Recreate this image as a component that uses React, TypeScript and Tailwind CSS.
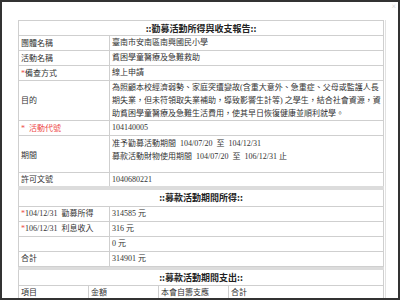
import React from 'react';

const td = 'border border-[#cfcfcf] px-[2px] py-0 align-middle';
const red = 'text-[#ee4b4b]';

const Row: React.FC<{ label: React.ReactNode; children?: React.ReactNode; h?: string }> = ({
    label,
    children,
    h = 'h-[15px]',
}) => (
    <tr className={h}>
        <td className={`${td} w-[91px]`}>{label}</td>
        <td className={`${td} align-top`}>{children}</td>
    </tr>
);

const Title: React.FC<{ children: React.ReactNode; gap?: boolean }> = ({ children, gap }) => (
    <tr className={gap ? 'h-[18px]' : 'h-[15px]'}>
        <td
            colSpan={2}
            className={`${td} text-center font-bold font-['Noto_Sans_CJK_TC',sans-serif] text-[9px] text-[#222] ${
                gap ? 'border-t-[4px] border-t-[#dcdcdc]' : ''
            }`}
        >
            {children}
        </td>
    </tr>
);

export default function App() {
    return (
        <div className="relative h-[300px] w-[400px] overflow-hidden border-2 border-[#333] bg-white pl-[16px] pt-[18px] font-['Liberation_Serif','Noto_Sans_CJK_TC',serif] text-[8px] leading-[13px] text-[#333]">
            <span className="absolute right-[2px] top-[-2px] text-[8px] text-[#ccc]">×</span>
            <div className="w-[368px] border-r border-[#e2e2e2] pr-[2px]">
                <table className="w-[366px] border-collapse">
                    <tbody>
                        <Title>::勸募活動所得與收支報告::</Title>
                        <Row label="團體名稱">臺南市安南區南興國民小學</Row>
                        <Row label="活動名稱">貧困學童醫療及急難救助</Row>
                        <Row label={<><span className={red}>*</span>備查方式</>}>線上申請</Row>
                        <tr className="h-[39px]">
                            <td className={td}>目的</td>
                            <td className={td}>
                                為照顧本校經濟弱勢、家庭突遭變故(含重大意外、急重症、父母或監護人長期失業，但未符領取失業補助，導致影響生計等) 之學生，結合社會資源，資助貧困學童醫療及急難生活費用，使其早日恢復健康並順利就學。
                            </td>
                        </tr>
                        <Row label={<span className={red}>*&nbsp; 活動代號</span>}>104140005</Row>
                        <tr className="h-[37px]">
                            <td className={`${td} pt-[3px]`}>期間</td>
                            <td className={`${td} align-top pt-[1px]`}>
                                <div>准予勸募活動期間&nbsp; 104/07/20&nbsp; 至&nbsp; 104/12/31</div>
                                <div>募款活動財物使用期間&nbsp; 104/07/20&nbsp; 至&nbsp; 106/12/31 止</div>
                            </td>
                        </tr>
                        <Row label="許可文號">1040680221</Row>
                        <Title gap>::募款活動期間所得::</Title>
                        <Row label={<><span className={red}>*</span>104/12/31&nbsp; 勸募所得</>}>314585 元</Row>
                        <Row label={<><span className={red}>*</span>106/12/31&nbsp; 利息收入</>}>316 元</Row>
                        <Row label="">0 元</Row>
                        <Row label="合計">314901 元</Row>
                    </tbody>
                </table>
                <table className="w-[366px] border-collapse">
                    <tbody>
                        <tr className="h-[17px]">
                            <td
                                colSpan={4}
                                className={`${td} border-t-[3px] border-t-[#dcdcdc] text-center font-bold font-['Noto_Sans_CJK_TC',sans-serif] text-[9px] text-[#222]`}
                            >
                                ::募款活動期間支出::
                            </td>
                        </tr>
                        <tr className="h-[15px]">
                            <td className={`${td} w-[70px]`}>項目</td>
                            <td className={`${td} w-[70px]`}>金額</td>
                            <td className={`${td} w-[70px]`}>本會自籌支應</td>
                            <td className={td}>合計</td>
                        </tr>
                    </tbody>
                </table>
            </div>
        </div>
    );
}
